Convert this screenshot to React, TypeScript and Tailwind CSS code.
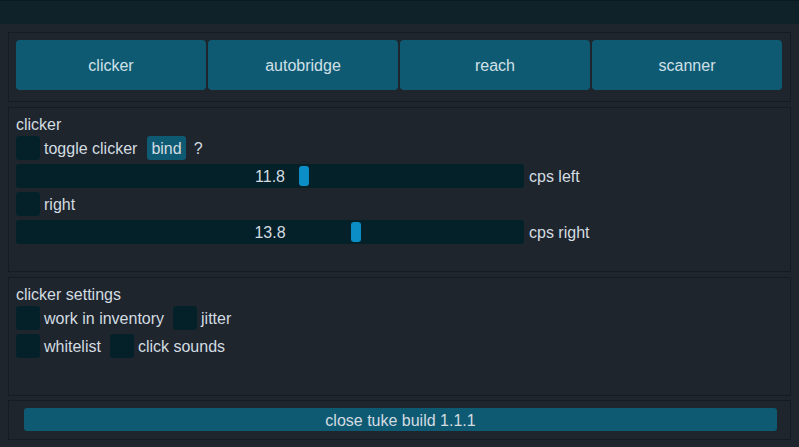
import React from 'react';

const font = { fontFamily: '"Liberation Sans", Arial, sans-serif' };

const Checkbox: React.FC = () => <div className="w-[24px] h-[24px] rounded-[3px] bg-[#04212a] shrink-0" />;

const Label: React.FC<{ className?: string; children: React.ReactNode }> = ({ className = '', children }) => (
  <span className={`pt-[2px] ${className}`}>{children}</span>
);

const CheckRow: React.FC<{ items: string[] }> = ({ items }) => (
  <div className="flex items-center h-[24px]">
    {items.map((label, i) => (
      <div key={i} className={`flex items-center ${i > 0 ? 'ml-[9px]' : ''}`}>
        <Checkbox />
        <Label className="ml-[4px]">{label}</Label>
      </div>
    ))}
  </div>
);

const Slider: React.FC<{ value: string; grab: number; label: string }> = ({ value, grab, label }) => (
  <div className="flex items-center h-[24px]">
    <div className="relative w-[508px] h-[24px] rounded-[3px] bg-[#04212a] flex items-center justify-center">
      <Label>{value}</Label>
      <div className="absolute top-[2px] w-[10px] h-[20px] rounded-[3px] bg-[#0b8ec6]" style={{ left: grab }} />
    </div>
    <Label className="ml-[5px]">{label}</Label>
  </div>
);

const Panel: React.FC<{ h: string; children: React.ReactNode }> = ({ h, children }) => (
  <div className={`${h} border border-[#141b21] px-[7px] pt-[7px]`}>{children}</div>
);

export default function App() {
  const tabs = ['clicker', 'autobridge', 'reach', 'scanner'];

  return (
    <div className="w-[799px] h-[447px] bg-[#1e252d] text-[#d3dce1] text-[16px] overflow-hidden" style={font}>
      {/* title bar */}
      <div className="h-[24px] bg-[#0f2129] border-t border-[#0b1a20]" />

      <div className="px-[8px] pt-[8px] flex flex-col gap-[5px]">
        {/* tabs */}
        <Panel h="h-[70px]">
          <div className="flex gap-[2px]">
            {tabs.map((t) => (
              <div
                key={t}
                className="w-[190px] h-[50px] pt-[2px] rounded-[4px] bg-[#0f5a73] text-[#cfe0e7] flex items-center justify-center"
              >
                {t}
              </div>
            ))}
          </div>
        </Panel>

        {/* clicker */}
        <Panel h="h-[165px]">
          <div className="flex flex-col gap-[4px]">
            <div className="h-[17px] leading-[19px]">clicker</div>
            <div className="flex items-center h-[24px]">
              <Checkbox />
              <Label className="ml-[4px]">toggle clicker</Label>
              <div className="ml-[10px] h-[24px] pt-[2px] px-[4px] rounded-[3px] bg-[#0f5a73] flex items-center">bind</div>
              <Label className="ml-[8px]">?</Label>
            </div>
            <Slider value="11.8" grab={283} label="cps left" />
            <CheckRow items={['right']} />
            <Slider value="13.8" grab={335} label="cps right" />
          </div>
        </Panel>

        {/* clicker settings */}
        <Panel h="h-[119px]">
          <div className="flex flex-col gap-[4px]">
            <div className="h-[17px] leading-[19px]">clicker settings</div>
            <CheckRow items={['work in inventory', 'jitter']} />
            <CheckRow items={['whitelist', 'click sounds']} />
          </div>
        </Panel>

        {/* footer */}
        <div className="h-[40px] -mt-[1px] border border-[#141b21] pl-[15px] pr-[13px] pt-[7px]">
          <div className="h-[23px] pt-[2px] rounded-[3px] bg-[#0f5a73] flex items-center justify-center">close tuke build 1.1.1</div>
        </div>
      </div>
    </div>
  );
}
